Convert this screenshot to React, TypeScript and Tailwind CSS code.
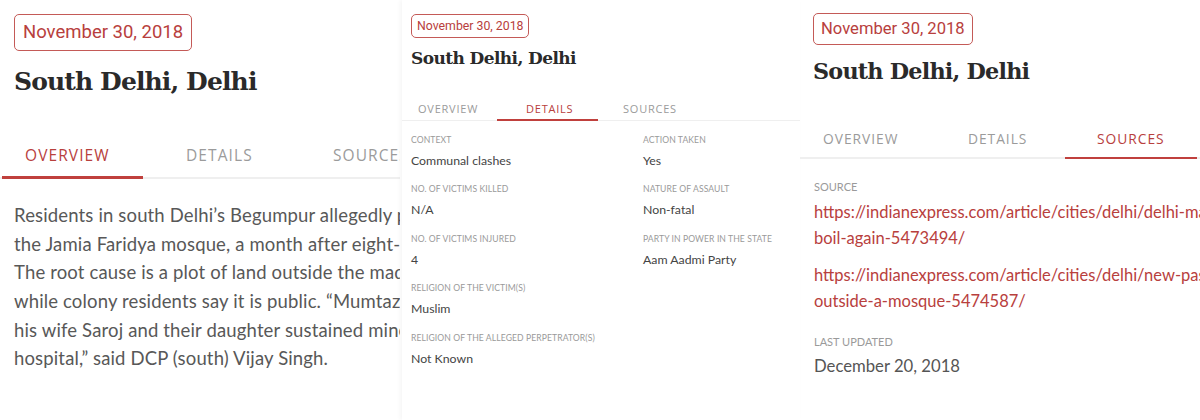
import React from "react";

const red = "text-[#b8403d]";

const Badge: React.FC<{ cls: string }> = ({ cls }) => (
  <div className={`inline-flex items-center border-[1.5px] border-[#c45a57] rounded-[5px] ${red} font-['Roboto',sans-serif] ${cls}`}>
    November 30, 2018
  </div>
);

const Title: React.FC<{ cls: string }> = ({ cls }) => (
  <h1 className={`font-['DejaVu_Serif',serif] font-bold text-[#2a2a2a] tracking-[-0.035em] ${cls}`}>South Delhi, Delhi</h1>
);

// lines as they show before the panel edge cuts them
const overview = [
  "Residents in south Delhi’s Begumpur allegedly p",
  "the Jamia Faridya mosque, a month after eight-y",
  "The root cause is a plot of land outside the mad",
  "while colony residents say it is public. “Mumtaz a",
  "his wife Saroj and their daughter sustained mino",
  "hospital,” said DCP (south) Vijay Singh.",
];

const details: [string, string][][] = [
  [["Context", "Communal clashes"], ["Action taken", "Yes"]],
  [["No. of victims killed", "N/A"], ["Nature of assault", "Non-fatal"]],
  [["No. of victims injured", "4"], ["Party in power in the state", "Aam Aadmi Party"]],
  [["Religion of the victim(s)", "Muslim"], ["", ""]],
  [["Religion of the alleged perpetrator(s)", "Not Known"], ["", ""]],
];

export default function App() {
  return (
    <div className="flex w-[1200px] h-[420px] bg-white overflow-hidden font-['Lato',sans-serif]">
      {/* panel 1: overview */}
      <div className="w-[400px] shrink-0 overflow-hidden pt-[14px]">
        <div className="pl-[14px]">
          <Badge cls="h-[37px] px-[8px] text-[18.5px]" />
          <Title cls="mt-[14px] text-[25px] leading-[34px]" />
        </div>
        <div className="mt-[45px] flex border-b-2 border-[#efefef] font-['Open_Sans',sans-serif] text-[15.5px] tracking-[0.07em] text-[#9b9b9b] whitespace-nowrap">
          <div className={`ml-[2px] w-[141px] shrink-0 pl-[23px] pb-[9px] border-b-[3px] border-[#c0403d] -mb-[2px] ${red}`}>OVERVIEW</div>
          <div className="pl-[43px] w-[190px] shrink-0">DETAILS</div>
          <div>SOURCES</div>
        </div>
        <div className="mt-[22px] pl-[14px] text-[18.5px] leading-[28.6px] tracking-[0.008em] text-[#585858] whitespace-nowrap">
          {overview.map((l) => (
            <p key={l}>{l}</p>
          ))}
        </div>
      </div>

      {/* panel 2: details */}
      <div className="ml-[2px] w-[398px] shrink-0 overflow-hidden pt-[12px] shadow-[-2px_0_4px_rgba(0,0,0,0.04)]">
        <div className="pl-[9px]">
          <Badge cls="h-[24px] px-[5px] text-[12.3px] border-[1px]" />
          <Title cls="mt-[8px] text-[17px] leading-[24px]" />
        </div>
        <div className="mt-[31px] flex border-b-[1.5px] border-[#efefef] font-['Open_Sans',sans-serif] text-[11px] tracking-[0.07em] text-[#9b9b9b] whitespace-nowrap">
          <div className="pl-[16px] w-[95px] pb-[2px]">OVERVIEW</div>
          <div className={`w-[101px] pl-[29px] border-b-[2.5px] border-[#c0403d] -mb-[1.5px] ${red}`}>DETAILS</div>
          <div className="pl-[25px]">SOURCES</div>
        </div>
        <div className="pl-[9px] pt-[13px] flex flex-col gap-[14.5px]">
          {details.map((row, i) => (
            <div key={i} className="grid grid-cols-[232px_1fr]">
              {row.map(([k, v], j) => (
                <div key={j}>
                  <div className="text-[8.6px] leading-[12px] uppercase tracking-[0.01em] text-[#9a9a9a]">{k}</div>
                  <div className="mt-[6px] text-[12.3px] leading-[17px] text-[#444]">{v}</div>
                </div>
              ))}
            </div>
          ))}
        </div>
      </div>

      {/* panel 3: sources */}
      <div className="w-[400px] shrink-0 overflow-hidden pt-[13px]">
        <div className="pl-[13px]">
          <Badge cls="h-[32px] px-[7px] text-[16.6px]" />
          <Title cls="mt-[11px] text-[22.3px] leading-[30px]" />
        </div>
        <div className="mt-[43px] flex border-b-2 border-[#efefef] font-['Open_Sans',sans-serif] text-[13.8px] tracking-[0.07em] text-[#9b9b9b] whitespace-nowrap">
          <div className="pl-[23px] w-[168px] pb-[7px]">OVERVIEW</div>
          <div className="w-[97px]">DETAILS</div>
          <div className={`w-[132px] pl-[32px] border-b-[2.5px] border-[#c0403d] -mb-[2px] ${red}`}>SOURCES</div>
        </div>
        <div className="pl-[14px] pt-[21px] whitespace-nowrap">
          <div className="text-[11px] leading-[14px] text-[#9a9a9a]">SOURCE</div>
          <div className={`mt-[5px] text-[16.5px] leading-[26px] ${red}`}>
            <p>https://indianexpress.com/article/cities/delhi/delhi-ma</p>
            <p>boil-again-5473494/</p>
          </div>
          <div className={`mt-[11px] text-[16.5px] leading-[26px] ${red}`}>
            <p>https://indianexpress.com/article/cities/delhi/new-pas</p>
            <p>outside-a-mosque-5474587/</p>
          </div>
          <div className="mt-[21px] text-[11px] leading-[14px] text-[#9a9a9a]">LAST UPDATED</div>
          <div className="mt-[6px] text-[16.7px] leading-[22px] text-[#555]">December 20, 2018</div>
        </div>
      </div>
    </div>
  );
}
